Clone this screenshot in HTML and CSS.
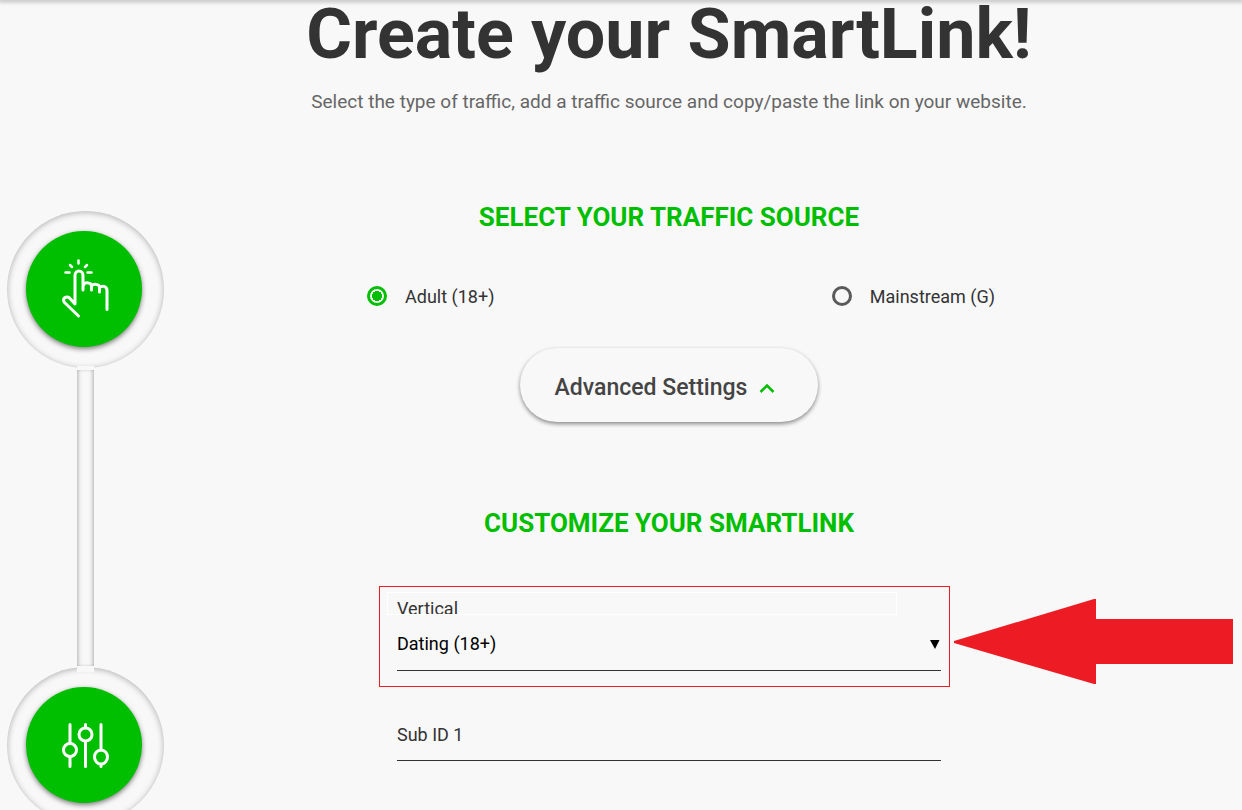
FILE: index.html
```html
<!DOCTYPE html>
<html lang="en">
<head>
    <meta charset="UTF-8">
    <meta name="viewport" content="width=device-width, initial-scale=1.0">
    <title>Create your SmartLink!</title>
    <link rel="stylesheet" href="styles.css">
</head>
<body>
    <div class="topbar"></div>
    <div class="wizard">
        <div class="steps">
            <div class="step">
                <div class="step-icon">
                    <svg width="50" height="60" viewBox="0 0 50 60" fill="none" stroke="#fff" stroke-width="3" stroke-linecap="round" stroke-linejoin="round">
                        <path d="M19.500 1.500v3M11 6l2 2M28 6l-2 2M6.500 13.500h4M28.500 13.500h4" stroke-width="2.500"/>
                        <path d="M19.500 57L5.500 43.500c-3-4 2-7 5-4.500l5.500 6V16.500c0-6 8-6 8 0V31"/>
                        <path d="M24.500 26c1-3 8-3 8 1v4M32.500 27.500c1-3 8-3 8 1v4.500M40.500 28.500c2-2 7.500-2 7.500 3v19"/>
                    </svg>
                </div>
            </div>
            <div class="connector"></div>
            <div class="step">
                <div class="step-icon">
                    <svg width="50" height="50" viewBox="0 0 50 50" fill="none" stroke="#fff" stroke-width="3" stroke-linecap="round">
                        <path d="M11 4.500V23M11 37v9.500M26.500 4.500v3M26.500 22v24.500M42 4.500V30M42 45v1.500"/>
                        <circle cx="11" cy="30" r="6.500"/>
                        <circle cx="26.500" cy="14.500" r="6.500"/>
                        <ellipse cx="42" cy="37" rx="6.500" ry="7"/>
                    </svg>
                </div>
            </div>
        </div>

        <main class="content">
            <h1>Create your SmartLink!</h1>
            <p class="intro">Select the type of traffic, add a traffic source and copy/paste the link on your website.</p>

            <h2>SELECT YOUR TRAFFIC SOURCE</h2>
            <div class="radios">
                <label class="radio"><input type="radio" name="traffic" checked>Adult (18+)</label>
                <label class="radio"><input type="radio" name="traffic">Mainstream (G)</label>
            </div>
            <button type="button" class="advanced">
                Advanced Settings
                <svg width="16" height="10" viewBox="0 0 16 10" fill="none" stroke="#00be00" stroke-width="2.500"><path d="M1.500 9L8 2.500 14.500 9"/></svg>
            </button>

            <h2 class="customize">CUSTOMIZE YOUR SMARTLINK</h2>
            <form class="fields">
                <div class="highlight">
                    <label class="vertical-label" for="vertical">Vertical</label>
                    <div class="field">
                        <select id="vertical" class="control">
                            <option>Dating (18+)</option>
                        </select>
                        <svg class="caret" width="10" height="10" viewBox="0 0 10 10"><path d="M0 1h9.500L5 10z"/></svg>
                    </div>
                    <svg class="arrow" width="280" height="86" viewBox="0 0 280 86"><path d="M0 42L140 0h2v20h137v45H142v20h-2L0 44z" fill="#ed1c24"/></svg>
                </div>
                <div class="field">
                    <label for="subid1">Sub ID 1</label>
                    <input type="text" id="subid1" class="control">
                </div>
            </form>
        </main>
    </div>
</body>
</html>
```
FILE: styles.css
```css
* {
    box-sizing: border-box;
}
body {
    margin: 0;
    height: 100vh;
    overflow: hidden;
    background: #f8f8f8;
    color: #333;
    font-family: Roboto, sans-serif;
    font-size: 18px;
}
.topbar {
    height: 0;
    box-shadow: 0 0 4px 2px rgba(0, 0, 0, 0.25);
}
.wizard {
    display: flex;
    padding: 0 68px 0 7px;
}

/* steps on the left */
.steps {
    display: flex;
    flex-direction: column;
    align-items: center;
    padding-top: 211px;
}
.step {
    flex: none;
    width: 157px;
    height: 157px;
    padding: 20px 19px;
    border-radius: 50%;
    box-shadow: inset 0 1px 6px rgba(0, 0, 0, 0.3);
}
.step-icon {
    display: flex;
    align-items: center;
    justify-content: center;
    width: 116px;
    height: 116px;
    border-radius: 50%;
    background: #00be00;
    box-shadow: 0 2px 5px rgba(0, 0, 0, 0.5);
}
.connector {
    position: relative;
    flex: none;
    width: 17px;
    height: 306px;
    margin: -2px 0 -5px;
    background: #f8f8f8;
    border: solid #f8f8f8;
    border-width: 4px 0 6px;
    box-shadow: inset 3px 0 4px -2px rgba(0, 0, 0, 0.3), inset -3px 0 4px -2px rgba(0, 0, 0, 0.3);
}

.content {
    flex: 1;
    display: flex;
    flex-direction: column;
    align-items: center;
}
h1 {
    margin: 0;
    font-size: 70px;
    line-height: 68px;
    font-weight: 700;
}
.intro {
    margin: 22px 0 88px;
    font-size: 19px;
    line-height: 24px;
    color: #666;
}
h2 {
    margin: 0;
    font-size: 26px;
    line-height: 30px;
    font-weight: 700;
    color: #00be00;
}

.radios {
    display: flex;
    justify-content: space-between;
    width: 100%;
    max-width: 652px;
    margin: 52px 0 40px;
    padding-left: 24px;
}
.radio {
    display: flex;
    align-items: center;
    height: 24px;
}
.radio input {
    appearance: none;
    width: 20px;
    height: 20px;
    margin: 0 18px 0 0;
    border: 3px solid #5a5a5a;
    border-radius: 50%;
}
.radio input:checked {
    border-color: #00be00;
    background: radial-gradient(circle, #00be00 5px, transparent 5px);
}

.advanced {
    display: flex;
    align-items: center;
    justify-content: center;
    gap: 12px;
    width: 298px;
    height: 74px;
    padding: 5px 8px 0 0;
    border: 0;
    border-radius: 37px;
    background: #f8f8f8;
    box-shadow: 0 2px 4px rgba(0, 0, 0, 0.45);
    color: #444;
    font: 500 23px Roboto, sans-serif;
}
.customize {
    margin-top: 86px;
}

.fields {
    width: 100%;
    max-width: 544px;
    margin-top: 48px;
}
.highlight {
    position: relative;
    margin: 0 -9px 20px -18px;
    padding: 5px 8px 15px 17px;
    border: 1px solid #ed1c24;
}
.vertical-label {
    display: block;
    width: 510px;
    height: 23px;
    margin: 0 0 2px -10px;
    padding: 5px 9px 0;
    overflow: hidden;
    border: 1px solid #fff;
    line-height: 22px;
}
.field {
    display: grid;
    align-items: center;
}
.field > * {
    grid-area: 1 / 1;
}
.control {
    appearance: none;
    width: 100%;
    height: 54px;
    padding: 0;
    border: 0;
    border-bottom: 1px solid #333;
    border-radius: 0;
    background: none;
    color: #000;
    font: 18px Roboto, sans-serif;
}
.caret {
    justify-self: end;
    margin-right: 1px;
    pointer-events: none;
}
.arrow {
    position: absolute;
    top: 12px;
    left: calc(100% + 5px);
}
```
